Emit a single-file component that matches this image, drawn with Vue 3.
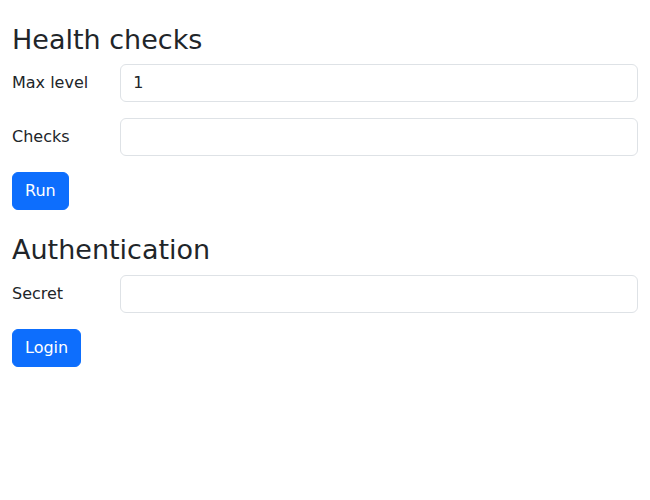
<script setup>
import { ref } from 'vue'

const maxLevel = ref(1)
const checks = ref('')
const secret = ref('')
</script>

<template>
  <main class="page">
    <form class="section" @submit.prevent>
      <h2 class="title">Health checks</h2>
      <div class="row">
        <label class="label" for="max-level">Max level</label>
        <div class="field">
          <input id="max-level" v-model="maxLevel" class="control" type="number" />
        </div>
      </div>
      <div class="row">
        <label class="label" for="checks">Checks</label>
        <div class="field">
          <input id="checks" v-model="checks" class="control" type="text" />
        </div>
      </div>
      <button class="button" type="submit">Run</button>
    </form>

    <form class="section" @submit.prevent>
      <h2 class="title">Authentication</h2>
      <div class="row">
        <label class="label" for="secret">Secret</label>
        <div class="field">
          <input id="secret" v-model="secret" class="control" type="password" />
        </div>
      </div>
      <button class="button" type="submit">Login</button>
    </form>
  </main>
</template>

<style>
body {
  margin: 0;
  background: #fff;
}
</style>

<style scoped>
.page {
  padding: 24px 12px;
  color: #212529;
  font-family: "DejaVu Sans", sans-serif;
  font-size: 16px;
  line-height: 1.5;
}

.section {
  margin-bottom: 24px;
}

.title {
  margin: 0 0 8px;
  font-size: 27px;
  font-weight: 400;
  line-height: 1.2;
}

.row {
  display: grid;
  grid-template-columns: minmax(0, 1fr) minmax(0, 5fr);
  margin: 0 -12px 16px;
}

.label {
  padding: 7px 0 7px 12px;
  white-space: nowrap;
}

.field {
  padding: 0 12px;
}

.control {
  display: block;
  box-sizing: border-box;
  width: 100%;
  padding: 6px 12px;
  border: 1px solid #dee2e6;
  border-radius: 6px;
  background: #fff;
  color: inherit;
  font: inherit;
  line-height: 24px;
  appearance: none;
}

.control::-webkit-inner-spin-button {
  height: auto;
}

.button {
  display: block;
  padding: 6px 12px;
  border: 1px solid #0d6efd;
  border-radius: 6px;
  background: #0d6efd;
  color: #fff;
  font: inherit;
  cursor: pointer;
}
</style>
